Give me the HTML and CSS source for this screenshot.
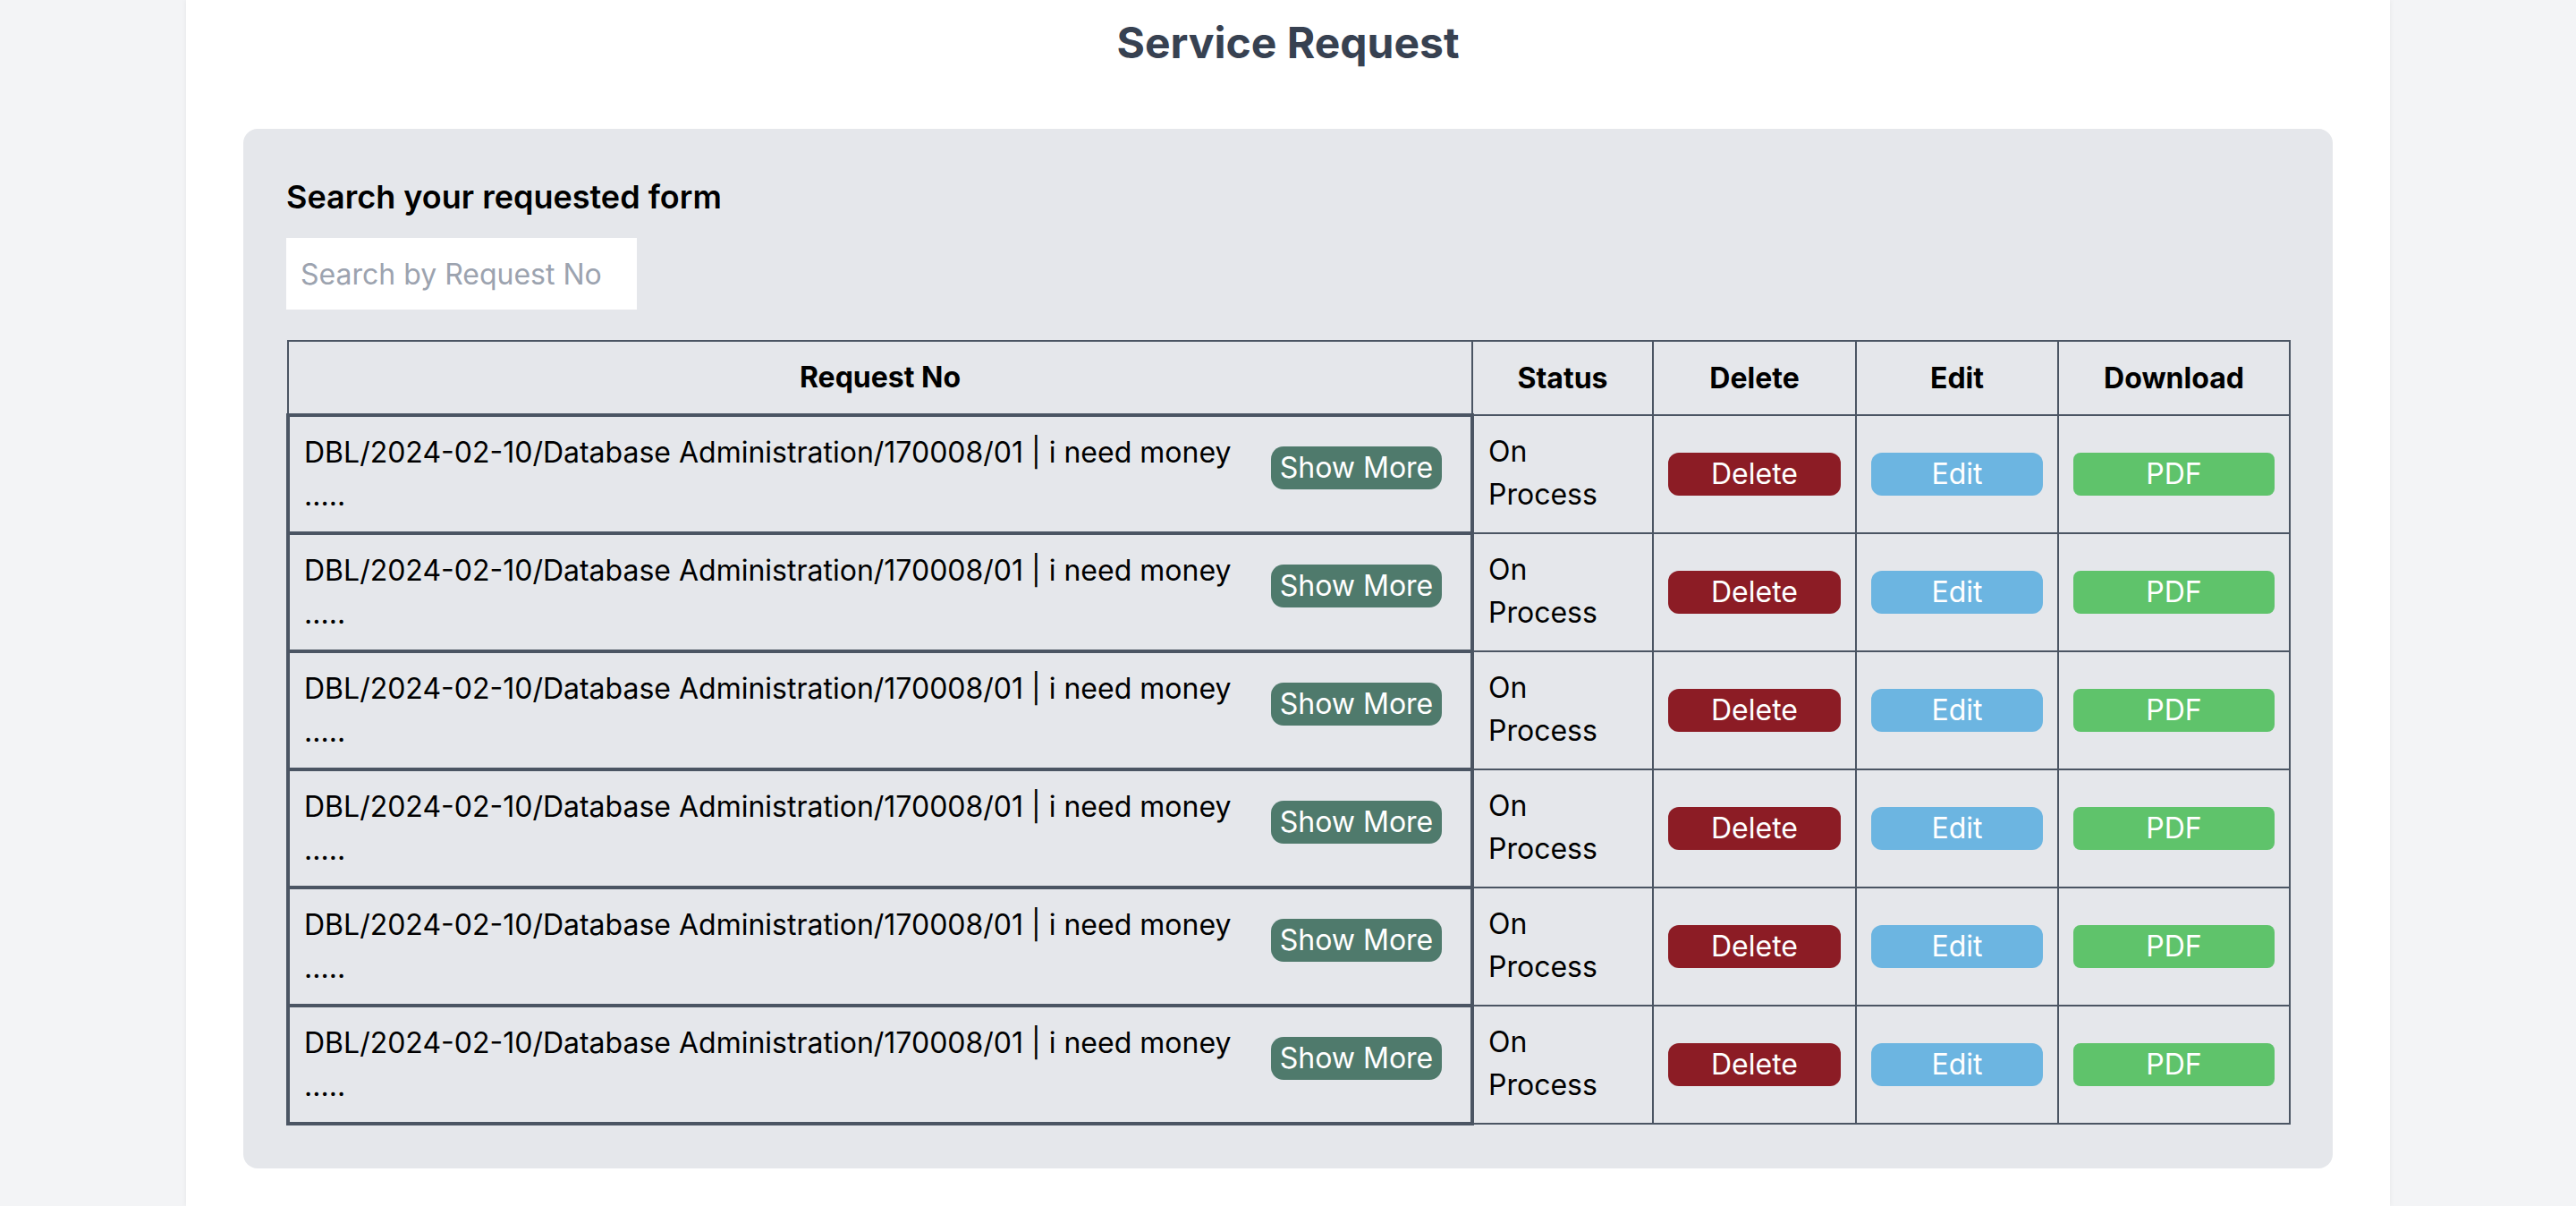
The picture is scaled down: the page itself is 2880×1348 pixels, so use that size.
FILE: index.html
```html
<!DOCTYPE html>
<html lang="en">
<head>
<meta charset="utf-8">
<title>Service Request</title>
<link rel="stylesheet" href="styles.css">
</head>
<body>
<main class="page">
  <h1 class="title">Service Request</h1>
  <section class="panel">
    <h2 class="panel-heading">Search your requested form</h2>
    <input class="search" type="text" placeholder="Search by Request No">
    <table class="requests">
      <colgroup>
        <col class="c-req"><col class="c-status"><col class="c-del"><col class="c-edit"><col class="c-dl">
      </colgroup>
      <thead>
        <tr><th>Request No</th><th>Status</th><th>Delete</th><th>Edit</th><th>Download</th></tr>
      </thead>
      <tbody>
        <tr>
          <td class="req"><div class="req-wrap"><span class="req-text">DBL/2024-02-10/Database Administration/170008/01 | i need money .....</span><button class="btn-more">Show More</button></div></td>
          <td class="status">On Process</td>
          <td class="act"><button class="btn btn-del">Delete</button></td>
          <td class="act"><button class="btn btn-edit">Edit</button></td>
          <td class="act"><button class="btn btn-pdf">PDF</button></td>
        </tr>
        <tr>
          <td class="req"><div class="req-wrap"><span class="req-text">DBL/2024-02-10/Database Administration/170008/01 | i need money .....</span><button class="btn-more">Show More</button></div></td>
          <td class="status">On Process</td>
          <td class="act"><button class="btn btn-del">Delete</button></td>
          <td class="act"><button class="btn btn-edit">Edit</button></td>
          <td class="act"><button class="btn btn-pdf">PDF</button></td>
        </tr>
        <tr>
          <td class="req"><div class="req-wrap"><span class="req-text">DBL/2024-02-10/Database Administration/170008/01 | i need money .....</span><button class="btn-more">Show More</button></div></td>
          <td class="status">On Process</td>
          <td class="act"><button class="btn btn-del">Delete</button></td>
          <td class="act"><button class="btn btn-edit">Edit</button></td>
          <td class="act"><button class="btn btn-pdf">PDF</button></td>
        </tr>
        <tr>
          <td class="req"><div class="req-wrap"><span class="req-text">DBL/2024-02-10/Database Administration/170008/01 | i need money .....</span><button class="btn-more">Show More</button></div></td>
          <td class="status">On Process</td>
          <td class="act"><button class="btn btn-del">Delete</button></td>
          <td class="act"><button class="btn btn-edit">Edit</button></td>
          <td class="act"><button class="btn btn-pdf">PDF</button></td>
        </tr>
        <tr>
          <td class="req"><div class="req-wrap"><span class="req-text">DBL/2024-02-10/Database Administration/170008/01 | i need money .....</span><button class="btn-more">Show More</button></div></td>
          <td class="status">On Process</td>
          <td class="act"><button class="btn btn-del">Delete</button></td>
          <td class="act"><button class="btn btn-edit">Edit</button></td>
          <td class="act"><button class="btn btn-pdf">PDF</button></td>
        </tr>
        <tr>
          <td class="req"><div class="req-wrap"><span class="req-text">DBL/2024-02-10/Database Administration/170008/01 | i need money .....</span><button class="btn-more">Show More</button></div></td>
          <td class="status">On Process</td>
          <td class="act"><button class="btn btn-del">Delete</button></td>
          <td class="act"><button class="btn btn-edit">Edit</button></td>
          <td class="act"><button class="btn btn-pdf">PDF</button></td>
        </tr>
      </tbody>
    </table>
  </section>
</main>
</body>
</html>
```
FILE: styles.css
```css
html, body {
  margin: 0;
  padding: 0;
}
body {
  background: #f3f4f6;
  font-family: Inter, "Noto Sans", sans-serif;
  color: #000;
}
.page {
  box-sizing: border-box;
  width: 2464px;
  min-height: 1348px;
  margin: 0 auto;
  background: #fff;
  box-shadow: 0 0 6px rgba(0, 0, 0, 0.06);
  padding: 16px 64px 0;
}
.title {
  margin: 0;
  font-size: 48px;
  line-height: 64px;
  font-weight: 700;
  color: #374151;
  text-align: center;
}
.panel {
  margin-top: 64px;
  background: #e5e7eb;
  border-radius: 16px;
  padding: 48px;
}
.panel-heading {
  margin: 0 0 18px;
  font-size: 36px;
  line-height: 56px;
  font-weight: 600;
  color: #000;
}
.search {
  display: block;
  box-sizing: border-box;
  width: 392px;
  height: 80px;
  border: none;
  outline: none;
  background: #fff;
  padding: 0 16px;
  font-family: Inter, "Noto Sans", sans-serif;
  font-size: 32px;
  color: #111827;
}
.search::placeholder {
  color: #9ca3af;
}
.requests {
  margin-top: 34px;
  width: 2238px;
  border-collapse: collapse;
  table-layout: fixed;
  font-size: 32px;
  line-height: 48px;
}
.c-req { width: 1324px; }
.c-status { width: 202px; }
.c-del { width: 227px; }
.c-edit { width: 226px; }
.c-dl { width: 259px; }
.requests th,
.requests td {
  border: 2px solid #4b5563;
  padding: 16px;
}
.requests th {
  font-weight: 700;
  text-align: center;
}
.requests td {
  vertical-align: top;
}
.requests td.req {
  border-width: 4px;
  padding: 16px;
}
.requests td.act {
  vertical-align: middle;
}
.req-wrap {
  display: flex;
  justify-content: space-between;
  align-items: flex-start;
}
.req-text {
  flex: 1;
}
.btn-more {
  flex: none;
  margin: 17px 16px 0 24px;
  width: 191px;
  height: 48px;
  padding: 0;
  border: none;
  border-radius: 14px;
  background: #4f7a6c;
  color: #fff;
  font-family: Inter, "Noto Sans", sans-serif;
  font-size: 32px;
  line-height: 48px;
}
.btn {
  display: block;
  width: 100%;
  height: 48px;
  padding: 0;
  border: none;
  border-radius: 12px;
  color: #fff;
  font-family: Inter, "Noto Sans", sans-serif;
  font-size: 32px;
  line-height: 48px;
}
.btn-del { background: #8c1c25; }
.btn-edit { background: #6cb5e1; }
.btn-pdf { background: #5fc36b; border-radius: 8px; }
```
